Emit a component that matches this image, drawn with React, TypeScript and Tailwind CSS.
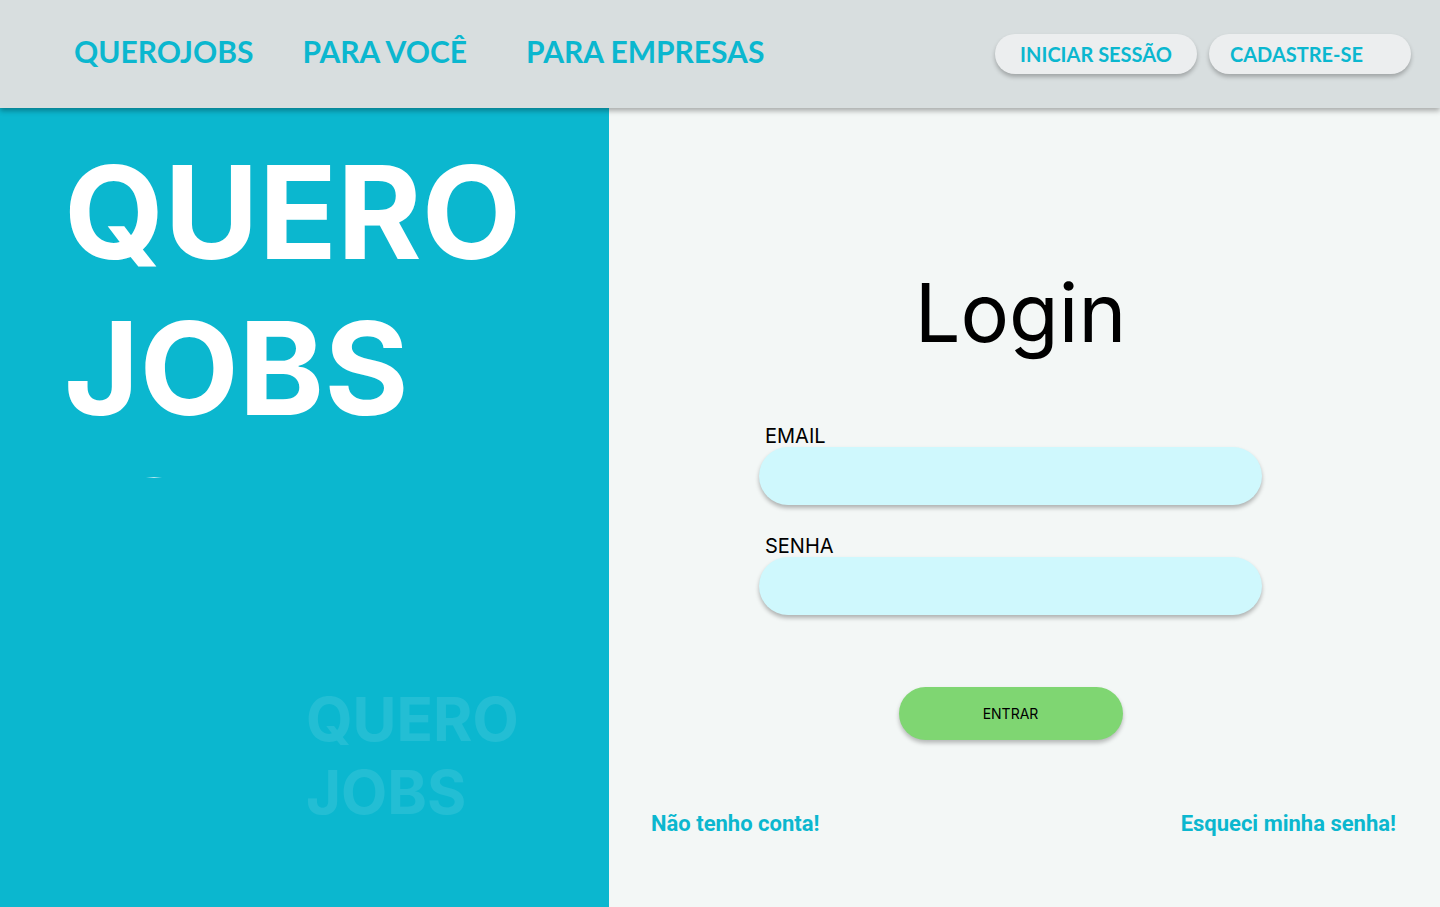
const nav = ["QUEROJOBS", "PARA VOCÊ", "PARA EMPRESAS"];

function PillInput({ label, type }: { label: string; type: string }) {
  return (
    <div className="flex flex-col">
      <label className="pl-[6px] text-[20px] leading-[20px] text-black">{label}</label>
      <input
        type={type}
        className="mt-[1px] h-[58px] w-[503px] rounded-full bg-[#cff8fd] px-6 shadow-[0_3px_4px_rgba(0,0,0,0.28)] outline-none"
      />
    </div>
  );
}

export default function App() {
  return (
    <div className="flex h-[907px] w-[1440px] flex-col overflow-hidden bg-[#f3f7f6] font-['Inter',sans-serif]">
      <header className="relative z-10 flex h-[108px] shrink-0 items-center bg-[#d8dedf] pl-[74px] pr-[29px] shadow-[0_3px_5px_rgba(0,0,0,0.3)]">
        <nav className="flex items-center pb-[6px] font-['Lato',sans-serif] text-[30px] font-bold text-[#0bb7cf]">
          <a className="mr-[49px]">{nav[0]}</a>
          <a className="mr-[59px]">{nav[1]}</a>
          <a>{nav[2]}</a>
        </nav>
        <div className="ml-auto flex items-center gap-[12px] font-['Lato',sans-serif] text-[20px] font-bold text-[#0bb7cf]">
          <button className="flex h-[40px] w-[202px] items-center justify-center rounded-full bg-[#eceeef] shadow-[0_3px_4px_rgba(0,0,0,0.25)]">
            INICIAR SESSÃO
          </button>
          <button className="flex h-[40px] w-[202px] items-center rounded-full bg-[#eceeef] pl-[21px] shadow-[0_3px_4px_rgba(0,0,0,0.25)]">
            CADASTRE-SE
          </button>
        </div>
      </header>

      <main className="flex min-h-0 flex-1">
        <section className="flex w-[609px] shrink-0 flex-col bg-[#0bb7cf] pl-[64px] pt-[26px]">
          <h1 className="text-[129px] font-bold leading-[156px] text-white">
            QUERO
            <br />
            JOBS
          </h1>
          <div className="ml-[82px] mt-[31px] h-[1px] w-[16px] bg-gradient-to-r from-transparent via-white/70 to-transparent" />
          <div className="ml-[242px] mt-[205px] text-[60px] font-bold leading-[73px] text-white/10">
            QUERO
            <br />
            JOBS
          </div>
        </section>

        <section className="flex flex-1 flex-col items-center pt-[160px]">
          <h2 className="mr-[8px] text-[81px] font-normal leading-[90px] text-black">Login</h2>
          <form className="mr-[28px] mt-[68px] flex flex-col gap-[31px]">
            <PillInput label="EMAIL" type="email" />
            <PillInput label="SENHA" type="password" />
          </form>
          <button className="mr-[28px] mt-[72px] h-[53px] w-[224px] rounded-full bg-[#7fd672] text-[14px] text-black shadow-[0_3px_4px_rgba(0,0,0,0.25)]">
            ENTRAR
          </button>
          <div className="mt-[70px] flex w-full justify-between pl-[42px] pr-[44px] font-['Roboto',sans-serif] text-[22px] font-bold leading-[28px] text-[#0bb7cf]">
            <a>Não tenho conta!</a>
            <a>Esqueci minha senha!</a>
          </div>
        </section>
      </main>
    </div>
  );
}
